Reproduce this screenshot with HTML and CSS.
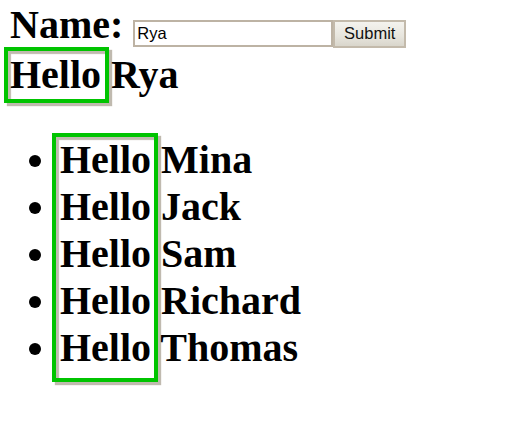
FILE: index.html
```html
<!DOCTYPE html>
<html>
<head>
<meta charset="utf-8">
<link rel="stylesheet" href="styles.css">
</head>
<body>
<form class="form-row">
  <label class="label" for="name">Name:</label>
  <input class="field" id="name" type="text" value="Rya">
  <button class="submit" type="button">Submit</button>
</form>
<div class="greeting">Hello Rya</div>
<ul class="names">
  <li>Hello Mina</li>
  <li>Hello Jack</li>
  <li>Hello Sam</li>
  <li>Hello Richard</li>
  <li>Hello Thomas</li>
</ul>
<div class="mark mark-single"></div>
<div class="mark mark-list"></div>
</body>
</html>
```
FILE: styles.css
```css
html, body {
  background: #ffffff;
}
body {
  position: relative;
  min-height: 440px;
  margin: 0;
  padding: 1px 10px 0;
  color: #000;
  font: bold 40px/47px "Liberation Serif", "Times New Roman", serif;
}
.form-row {
  display: flex;
  align-items: flex-start;
  gap: 10px;
  height: 47px;
  margin: 0;
}
.label {
  display: block;
}
.field {
  box-sizing: border-box;
  width: 200px;
  height: 27px;
  margin: 19px 0 0;
  padding: 0 0 1px 2px;
  border: 2px solid #bdb3a4;
  background: #fff;
  color: #000;
  font: 16.5px/23px "Liberation Sans", Arial, sans-serif;
  outline: none;
}
.submit {
  box-sizing: border-box;
  width: 73px;
  height: 28px;
  margin: 19px 0 0 -10px;
  padding: 0 0 1px;
  border: 2px solid #c3baab;
  border-radius: 0;
  background: linear-gradient(#f4f3ee, #e7e5dd 60%, #d9d6cc);
  color: #111;
  font: 16.5px/23px "Liberation Sans", Arial, sans-serif;
}
.greeting {
  margin-top: 3px;
}
.names {
  margin: 38px 0 0;
  padding-left: 50px;
}
.mark {
  position: absolute;
  box-sizing: border-box;
  border: 4px solid #00c400;
  box-shadow: 3px 3px 1px rgba(130, 118, 95, 0.5), inset 3px 3px 1px rgba(130, 118, 95, 0.5);
}
.mark-single {
  left: 4px;
  top: 47px;
  width: 105px;
  height: 56px;
}
.mark-list {
  left: 52px;
  top: 133px;
  width: 106px;
  height: 249px;
}
```
